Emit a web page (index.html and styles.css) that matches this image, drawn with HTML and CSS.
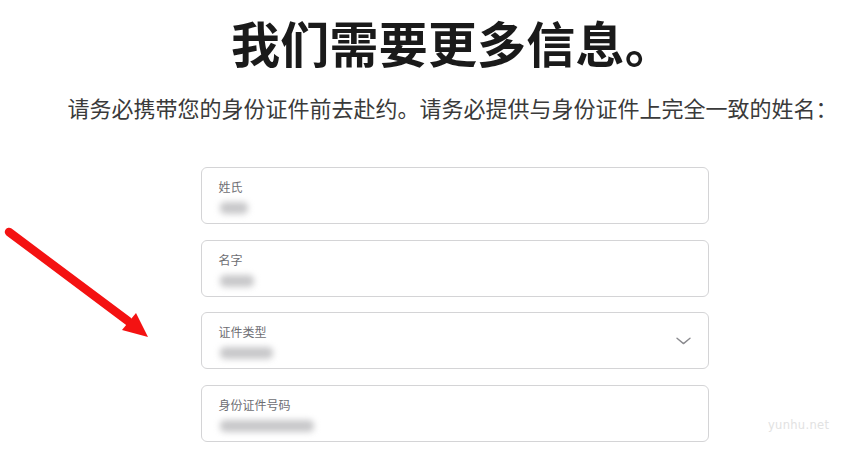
FILE: index.html
```html
<!DOCTYPE html>
<html lang="zh-CN">
<head>
<meta charset="utf-8">
<title>我们需要更多信息</title>
<link rel="stylesheet" href="styles.css">
</head>
<body>
<div class="page">
  <h1 class="title">我们需要更多信息。</h1>
  <p class="intro">请务必携带您的身份证件前去赴约。请务必提供与身份证件上完全一致的姓名：</p>
  <form class="form">
    <div class="field">
      <div class="label">姓氏</div>
      <div class="value"><span class="blur" style="width:28px"></span></div>
    </div>
    <div class="field">
      <div class="label">名字</div>
      <div class="value"><span class="blur" style="width:34px"></span></div>
    </div>
    <div class="field field-select">
      <div class="field-main">
        <div class="label">证件类型</div>
        <div class="value"><span class="blur" style="width:53px"></span></div>
      </div>
      <svg class="chevron" width="15" height="8" viewBox="0 0 15 8"><path d="M1 1.2 L7.5 6.6 L14 1.2" fill="none" stroke="#8a8a8e" stroke-width="1.4" stroke-linecap="round" stroke-linejoin="round"/></svg>
    </div>
    <div class="field">
      <div class="label">身份证件号码</div>
      <div class="value"><span class="blur" style="width:94px"></span></div>
    </div>
  </form>
  <svg class="arrow" width="170" height="130" viewBox="0 0 170 130">
    <line x1="9" y1="232" x2="128" y2="321" transform="translate(0,-210)" stroke="#f41212" stroke-width="8.5" stroke-linecap="round"/>
    <polygon points="148,127 122,120 136,103" fill="#f41212"/>
  </svg>
  <div class="watermark">yunhu.net</div>
</div>
</body>
</html>
```
FILE: styles.css
```css
html, body {
  margin: 0;
  padding: 0;
  background: #ffffff;
}
.page {
  position: relative;
  width: 867px;
  height: 450px;
  overflow: hidden;
  box-sizing: border-box;
  padding-left: 22px;
  display: flex;
  flex-direction: column;
  align-items: center;
  font-family: "Noto Sans CJK SC", "Noto Sans", sans-serif;
}
.title {
  margin: 13px 0 0 16px;
  font-size: 49px;
  line-height: 58px;
  font-weight: 700;
  color: #1a1a1a;
  letter-spacing: 0.2px;
}
.intro {
  margin: 21px 0 0 16px;
  font-size: 22px;
  line-height: 30px;
  color: #3a3a3a;
  font-weight: 400;
}
.form {
  margin: 45px 0 0 20px;
  width: 508px;
  display: flex;
  flex-direction: column;
  gap: 15.5px;
}
.field {
  box-sizing: border-box;
  height: 57px;
  border: 1px solid #d4d4d6;
  border-radius: 6px;
  padding: 10px 17px 0 17px;
}
.field-select {
  display: flex;
  align-items: center;
  justify-content: space-between;
  padding-top: 0;
}
.field-select .field-main {
  padding-top: 10px;
  align-self: flex-start;
}
.chevron {
  display: block;
  margin-right: 0;
}
.label {
  font-size: 12px;
  line-height: 17px;
  color: #6e6e73;
}
.value {
  margin-top: 7px;
  height: 12px;
  display: flex;
  padding-left: 1px;
}
.blur {
  display: block;
  height: 12px;
  border-radius: 5px;
  background: #c8c8ca;
  filter: blur(3px);
}
.arrow {
  position: absolute;
  left: 0;
  top: 210px;
}
.watermark {
  position: absolute;
  left: 768px;
  top: 418px;
  font-family: "DejaVu Sans", sans-serif;
  font-size: 11.5px;
  color: #e2e2e2;
  letter-spacing: 0.3px;
}
```
